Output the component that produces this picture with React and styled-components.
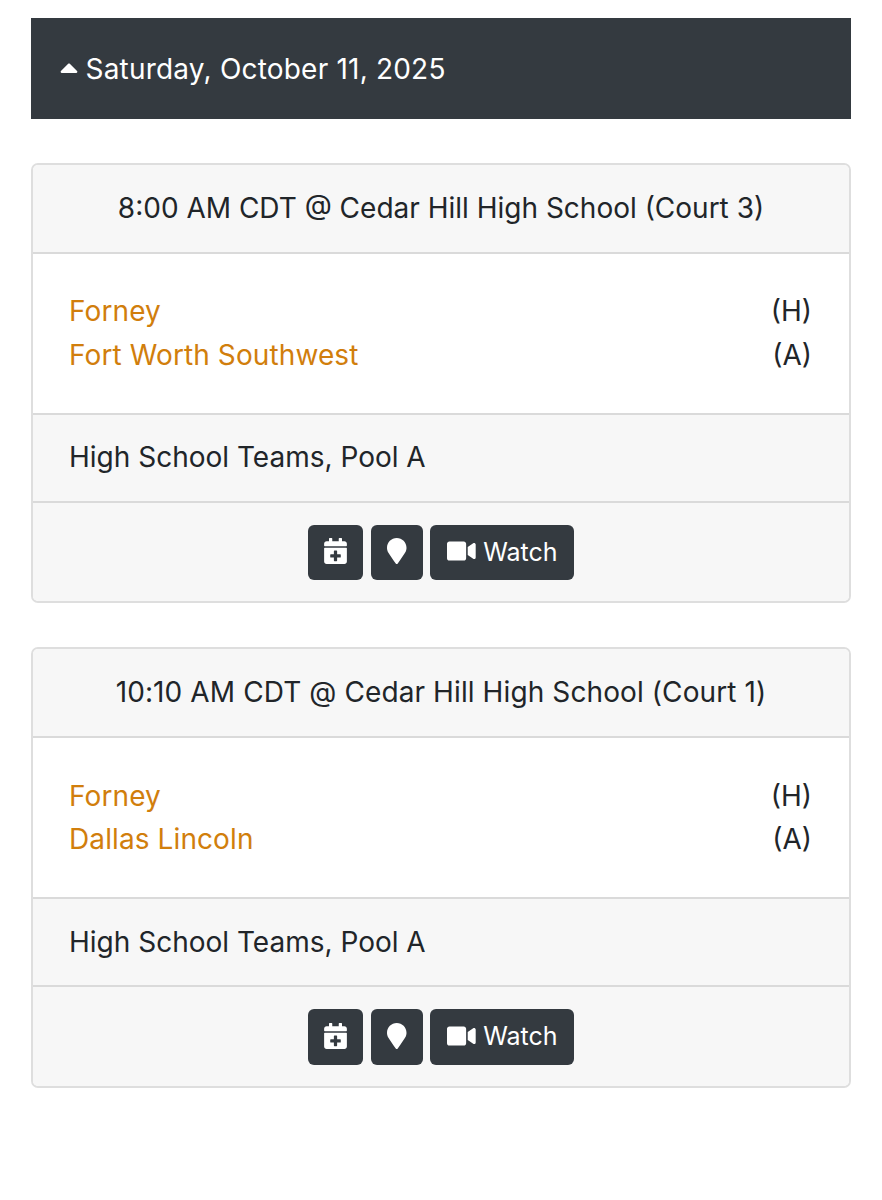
import React, { useState } from 'react';
import styled, { createGlobalStyle } from 'styled-components';
import { FaCalendarPlus, FaCaretUp, FaMapMarker, FaVideo } from 'react-icons/fa';

const games = [
  {
    id: 1,
    title: '8:00 AM CDT @ Cedar Hill High School (Court 3)',
    titleSpacing: 0,
    home: 'Forney',
    away: 'Fort Worth Southwest',
    division: 'High School Teams, Pool A',
  },
  {
    id: 2,
    title: '10:10 AM CDT @ Cedar Hill High School (Court 1)',
    titleSpacing: 0.1,
    home: 'Forney',
    away: 'Dallas Lincoln',
    division: 'High School Teams, Pool A',
  },
];

export default function App() {
  const [isOpen, setIsOpen] = useState(true);

  return (
    <>
      <GlobalStyle />
      <Page>
        <DayHeader onClick={() => setIsOpen(!isOpen)}>
          <Caret $open={isOpen} />
          <span>Saturday, October 11, 2025</span>
        </DayHeader>
        {isOpen &&
          games.map((game) => (
            <Card key={game.id}>
              <CardHeader $spacing={game.titleSpacing}>{game.title}</CardHeader>
              <Teams>
                <TeamRow>
                  <TeamLink href="#">{game.home}</TeamLink>
                  <span>(H)</span>
                </TeamRow>
                <TeamRow>
                  <TeamLink href="#">{game.away}</TeamLink>
                  <span>(A)</span>
                </TeamRow>
              </Teams>
              <Division>{game.division}</Division>
              <Actions>
                <Button $width={55.3} $iconWidth={23} aria-label="Add to calendar">
                  <FaCalendarPlus />
                </Button>
                <Button $width={52} $iconWidth={19.5} aria-label="Location">
                  <FaMapMarker />
                </Button>
                <Button $width={143.5} $iconWidth={28.7}>
                  <FaVideo />
                  <span>Watch</span>
                </Button>
              </Actions>
            </Card>
          ))}
      </Page>
    </>
  );
}

const GlobalStyle = createGlobalStyle`
  * {
    box-sizing: border-box;
  }
  body {
    margin: 0;
    background: #fff;
    color: #212529;
    font-family: Inter, 'Liberation Sans', sans-serif;
    font-size: 28px;
    line-height: 43.5px;
  }
`;

const Page = styled.main`
  display: flex;
  flex-direction: column;
  gap: 43.9px;
  min-height: 1200px;
  padding: 18px 31px;
`;

const DayHeader = styled.div`
  display: flex;
  align-items: center;
  gap: 7.5px;
  height: 101.1px;
  padding: 2px 29px 0;
  background: #343a40;
  color: #fff;
  letter-spacing: 0.2px;
  cursor: pointer;
`;

const Caret = styled(FaCaretUp)`
  width: 18px;
  height: 29px;
  margin-top: -4px;
  transform: ${({ $open }) => ($open ? 'none' : 'rotate(180deg)')};
`;

const Card = styled.section`
  display: flex;
  flex-direction: column;
  height: 440.5px;
  border: 2px solid #dedede;
  border-radius: 7px;
  overflow: hidden;
`;

const CardHeader = styled.div`
  height: 89px;
  padding-top: 22px;
  border-bottom: 2px solid #dadada;
  background: #f7f7f7;
  text-align: center;
  letter-spacing: ${({ $spacing }) => $spacing}px;
`;

const Teams = styled.div`
  flex: 1;
  padding: 36.2px 37px 0 36px;
`;

const TeamRow = styled.div`
  display: flex;
  justify-content: space-between;
`;

const TeamLink = styled.a`
  color: #d17e0c;
  text-decoration: none;
  letter-spacing: 0.1px;
`;

const Division = styled.div`
  height: 90px;
  padding: 21.3px 36px 0;
  border-top: 2px solid #dadada;
  border-bottom: 2px solid #dadada;
  background: #f7f7f7;
`;

const Actions = styled.div`
  display: flex;
  justify-content: center;
  gap: 7.6px;
  height: 98.5px;
  padding-top: 22px;
  background: #f7f7f7;
`;

const Button = styled.button`
  display: flex;
  align-items: center;
  justify-content: center;
  gap: 7.5px;
  width: ${({ $width }) => $width}px;
  height: 55.5px;
  padding: 0;
  border: 0;
  border-radius: 6px;
  background: #343a40;
  color: #fff;
  font: inherit;
  font-size: 25px;
  cursor: pointer;

  svg {
    flex-shrink: 0;
    width: ${({ $iconWidth }) => $iconWidth}px;
    height: 26px;
    margin-bottom: 3px;
  }
`;
